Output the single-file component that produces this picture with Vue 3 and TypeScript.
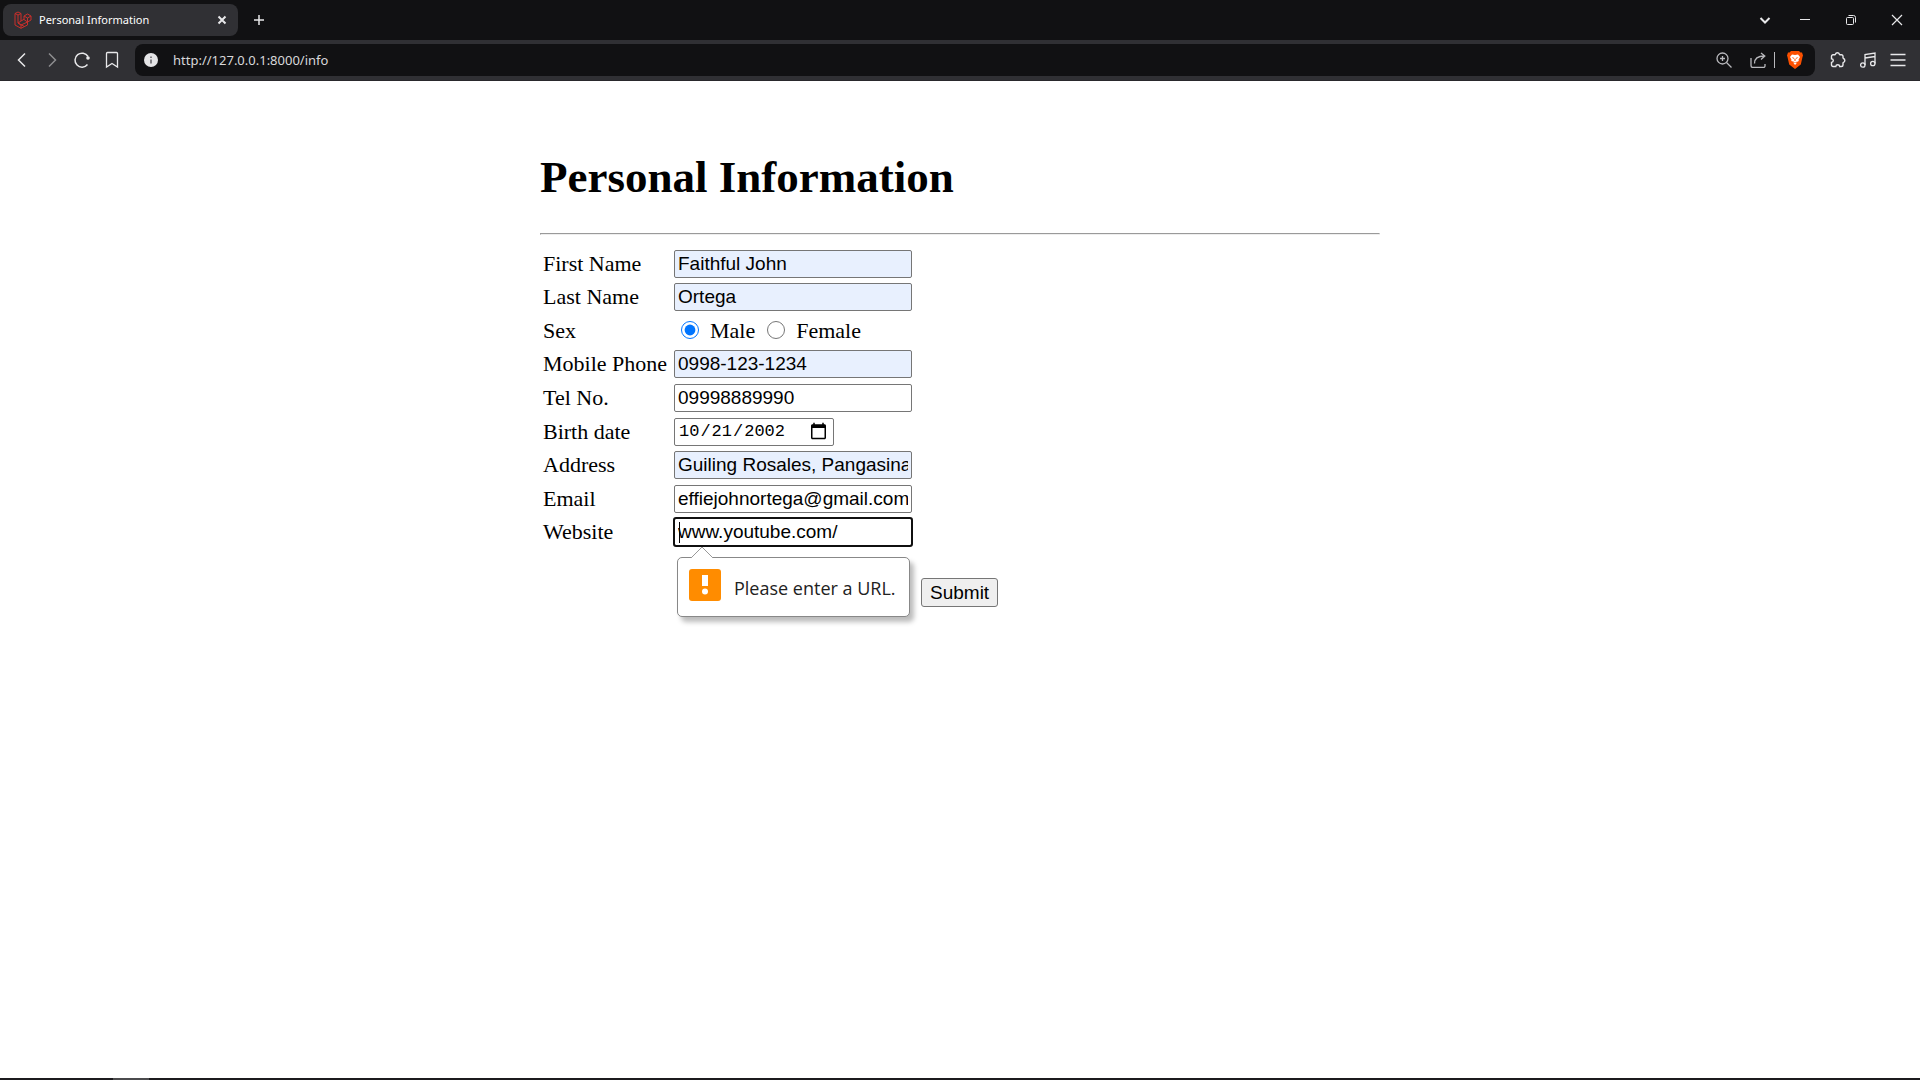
<script setup lang="ts">
import { reactive } from 'vue'

interface Field {
  id: string
  label: string
  type: 'text' | 'radio' | 'tel' | 'date' | 'email' | 'url'
  filled?: boolean
  roomy?: boolean
}

const fields: Field[] = [
  { id: 'firstName', label: 'First Name', type: 'text', filled: true },
  { id: 'lastName', label: 'Last Name', type: 'text', filled: true },
  { id: 'sex', label: 'Sex', type: 'radio', roomy: true },
  { id: 'mobile', label: 'Mobile Phone', type: 'text', filled: true },
  { id: 'telephone', label: 'Tel No.', type: 'tel', roomy: true },
  { id: 'birthDate', label: 'Birth date', type: 'date', roomy: true },
  { id: 'address', label: 'Address', type: 'text', filled: true },
  { id: 'email', label: 'Email', type: 'email', roomy: true },
  { id: 'website', label: 'Website', type: 'url' },
]

const form = reactive<Record<string, string>>({
  firstName: 'Faithful John',
  lastName: 'Ortega',
  sex: 'Male',
  mobile: '0998-123-1234',
  telephone: '09998889990',
  birthDate: '2002-10-21',
  address: 'Guiling Rosales, Pangasinan',
  email: 'effiejohnortega@gmail.com',
  website: 'www.youtube.com/',
})
</script>

<template>
  <div class="window">
    <header>
      <div class="tabs">
        <div class="tab">
          <svg class="logo" width="18" height="18" viewBox="0 0 18 18">
            <path d="M1 2.5 4 1l3 1.500v7.500l3-1.700V5l3.500-2L17 5v4l-3.500 2v3L7 17.300l-6-3.300zM1 2.500 4 4l3-1.500M4 4v8l3-2M4 12l6 3.300M10 5l3.500 2L17 5M13.500 7v4L10 8.500M7 17.300V14l6.500-3M4 12l3 2" />
          </svg>
          <span class="title">Personal Information</span>
          <button class="plain" aria-label="Close tab">
            <svg width="10" height="10" viewBox="0 0 10 10" stroke-width="2"><path d="M1.500 1.500l7 7M8.500 1.500l-7 7" /></svg>
          </button>
        </div>
        <button class="plain" aria-label="New tab">
          <svg width="12" height="12" viewBox="0 0 12 12" stroke-width="1.500"><path d="M6 1v10M1 6h10" /></svg>
        </button>
        <div class="controls">
          <button class="plain" aria-label="Search tabs">
            <svg width="12" height="12" viewBox="0 0 12 12" stroke-width="2"><path d="M1.500 4 6 8.500 10.500 4" /></svg>
          </button>
          <button class="plain" aria-label="Minimize">
            <svg width="12" height="12" viewBox="0 0 12 12"><path d="M1 5.500h10" /></svg>
          </button>
          <button class="plain" aria-label="Restore">
            <svg width="12" height="12" viewBox="0 0 12 12"><rect x="1.500" y="3.500" width="7" height="7" rx="1" /><path d="M3.500 1.500h5a2 2 0 0 1 2 2v5" /></svg>
          </button>
          <button class="plain" aria-label="Close">
            <svg width="12" height="12" viewBox="0 0 12 12" stroke-width="1.200"><path d="M1 1l10 10M11 1 1 11" /></svg>
          </button>
        </div>
      </div>

      <div class="toolbar">
        <nav>
          <button class="plain" aria-label="Back">
            <svg width="18" height="18" viewBox="0 0 18 18" stroke-width="1.500"><path d="M12 2.500 5.500 9l6.500 6.500" /></svg>
          </button>
          <button class="plain dim" aria-label="Forward">
            <svg width="18" height="18" viewBox="0 0 18 18" stroke-width="1.500"><path d="M6 2.500 12.500 9 6 15.500" /></svg>
          </button>
          <button class="plain" aria-label="Reload">
            <svg width="18" height="18" viewBox="0 0 18 18" stroke-width="1.500"><path d="M14.500 13.500A7 7 0 1 1 15 5.500" /><circle cx="15" cy="7" r="1.800" fill="#e8e8ea" stroke="none" /></svg>
          </button>
          <button class="plain" aria-label="Bookmark">
            <svg width="18" height="18" viewBox="0 0 18 18" stroke-width="1.300"><path d="M4.500 1.500h9a1 1 0 0 1 1 1v13.500L9 12.500 3.500 16V2.500a1 1 0 0 1 1-1z" /></svg>
          </button>
        </nav>
        <div class="address">
          <svg width="14" height="14" viewBox="0 0 14 14"><circle cx="7" cy="7" r="7" fill="#e4e4e6" stroke="none" /><path d="M7 6.500V10.500M7 3.500v1.500" stroke="#66656b" stroke-width="1.600" /></svg>
          <input class="url" type="text" aria-label="Address bar" value="http://127.0.0.1:8000/info" />
          <div class="actions">
            <svg width="16" height="16" viewBox="0 0 16 16" stroke-width="1.300"><circle cx="6.500" cy="6.500" r="5.500" /><path d="M10.500 10.500l5 5M4 6.500h5M6.500 4v5" /></svg>
            <svg width="16" height="16" viewBox="0 0 16 16" stroke-width="1.300"><path d="M1 6v7.500a2 2 0 0 0 2 2h10.500a1.500 1.500 0 0 0 1.500-1.500v-2M4.500 11.500c0-5 3-7.500 10-7.500M11 1l3.800 3L11 7.500" /></svg>
            <span class="divider"></span>
            <svg width="16" height="18" viewBox="0 0 16 18" stroke="none"><path class="shield" d="M4 0h8l1.500 1.500 1.500 0 1 3-.5 1.500-1.700 7.500L8 18l-5.800-4.500L.5 6 0 4.500l1-3 1.500 0z" /><path fill="#fff" d="M5 3.500 8 4l3-.5 2 2.500-1.500 2.700.3 1.300-2.500 1.200.2 1.300L8 14l-1.500-2 .2-1.300L4.200 10l.3-1.300L3 6z" /><path class="shield" d="M4.500 6.300 7 6.800 6.700 8zM11.500 6.300 9 6.800 9.300 8zM7.600 7.500h.8l.3 2L8 10l-.7-.5zM6 10.600l2 .8 2-.8-.8 1.200H6.800z" /></svg>
          </div>
        </div>
        <div class="extras">
          <button class="plain" aria-label="Extensions">
            <svg width="16" height="16" viewBox="0 0 16 16" stroke-width="1.400"><path d="M3 2.700h1.800c.4 0 .5-.2.600-.5a2.100 2.100 0 0 1 4 0c.1.300.3.500.6.500h1.500a1.500 1.500 0 0 1 1.500 1.500v1.600c0 .4.200.6.500.7a2.100 2.100 0 0 1 0 3.900c-.3.100-.5.300-.5.600v2a1.500 1.500 0 0 1-1.500 1.500H9.700c-.2-2.300-3.700-2.300-3.900 0H3A1.500 1.500 0 0 1 1.500 13v-2.600c2.400-.2 2.400-3.400 0-3.600V4.200A1.500 1.500 0 0 1 3 2.700z" /></svg>
          </button>
          <button class="plain" aria-label="Media">
            <svg width="16" height="16" viewBox="0 0 16 16" stroke-width="1.300"><circle cx="2.800" cy="13" r="2.200" /><circle cx="12.800" cy="11.500" r="2.200" /><path d="M5 13V2.500L15 1v10.500M5 6l10-1.500" /></svg>
          </button>
          <button class="plain" aria-label="Menu">
            <svg width="16" height="14" viewBox="0 0 16 14" stroke-width="1.300"><path d="M.5 1.500h15M.5 7h15M.5 12.500h15" /></svg>
          </button>
        </div>
      </div>
    </header>

    <main>
      <h1>Personal Information</h1>
      <hr />
      <form novalidate @submit.prevent>
        <table>
          <tbody>
            <tr v-for="field in fields" :key="field.id" :class="{ roomy: field.roomy }">
              <td>
                <span v-if="field.type === 'radio'">{{ field.label }}</span>
                <label v-else :for="field.id">{{ field.label }}</label>
              </td>
              <td>
                <div v-if="field.type === 'radio'" class="choices">
                  <label v-for="option in ['Male', 'Female']" :key="option">
                    <input v-model="form.sex" type="radio" name="sex" :value="option" />{{ option }}
                  </label>
                </div>
                <div v-else class="control" :class="{ current: field.type === 'url' }">
                  <input :id="field.id" v-model="form[field.id]" class="box" :class="{ filled: field.filled }" :type="field.type" />
                  <div v-if="field.type === 'url'" class="bubble" role="alert">
                    <svg class="arrow" width="24" height="12" viewBox="0 0 24 12"><path d="M1 12 12 1l11 11" fill="#fff" stroke="#999" /></svg>
                    <svg width="32" height="32" viewBox="0 0 32 32" stroke="none"><rect width="32" height="32" rx="3" fill="#ff8c00" /><path fill="#fff" d="M13 6h6v11h-6z" /><circle cx="16" cy="22.500" r="3" fill="#fff" /></svg>
                    <span>Please enter a URL.</span>
                  </div>
                </div>
              </td>
            </tr>
            <tr>
              <td colspan="2"></td>
              <td class="send"><button class="submit" type="submit">Submit</button></td>
            </tr>
          </tbody>
        </table>
      </form>
    </main>
    <footer><span></span></footer>
  </div>
</template>

<style>
body {
  background: #fff;
}
</style>

<style scoped>
.window {
  display: flex;
  flex-direction: column;
  min-height: 100vh;
}

header {
  font-family: "Noto Sans", sans-serif;
  color: #fff;
}

header svg {
  display: block;
  flex: none;
  fill: none;
  stroke: #e8e8ea;
}

.plain {
  padding: 0;
  border: 0;
  background: none;
}

.tabs {
  display: flex;
  align-items: center;
  height: 40px;
  background: #111113;
}

.tab {
  display: flex;
  align-items: center;
  box-sizing: border-box;
  width: 235px;
  height: 32px;
  margin: 0 15px 0 3px;
  padding: 0 11px;
  border-radius: 8px;
  background: #303034;
}

.tab .logo {
  stroke: #c92f2b;
}

.title {
  flex: 1;
  padding-left: 7px;
  font-size: 11px;
  line-height: 16px;
}

.controls {
  display: flex;
  gap: 34px;
  margin-left: auto;
  padding-right: 17px;
}

.controls .plain:first-child {
  margin-right: -6px;
}

.toolbar {
  display: flex;
  align-items: center;
  height: 40px;
  border-bottom: 1px solid #29282c;
  background: #303034;
}

nav {
  display: flex;
  gap: 12px;
  padding: 0 14px 0 13px;
}

.dim {
  opacity: 0.5;
}

.address {
  display: flex;
  flex: 1;
  align-items: center;
  height: 32px;
  padding: 0 12px 0 9px;
  border-radius: 8px;
  background: #111113;
}

.url {
  flex: 1;
  min-width: 0;
  padding: 0 0 0 15px;
  border: 0;
  outline: 0;
  background: none;
  color: #d8d8da;
  font-family: "Noto Sans", sans-serif;
  font-size: 13px;
}

.actions {
  display: flex;
  align-items: center;
  gap: 18px;
}

.actions svg {
  stroke: #b9b9bd;
}

.actions svg:last-child {
  stroke: none;
}

.shield {
  fill: #fb5000;
}

.divider {
  width: 1px;
  height: 16px;
  margin: 0 -6px 0 -10px;
  background: #b9b9bd;
}

.extras {
  display: flex;
  align-items: center;
  gap: 14px;
  padding: 0 14px 0 15px;
}

main {
  flex: 1;
  box-sizing: border-box;
  width: 100%;
  max-width: 840px;
  margin: 0 auto;
  padding-top: 70px;
  color: #000;
  font-family: "Liberation Serif", "Times New Roman", serif;
  font-size: 22px;
}

h1 {
  margin: 0 0 30px;
  font-size: 45px;
  line-height: 52px;
}

hr {
  margin: 0 0 11px;
  border: 1px solid;
  border-color: #9a9a9a #eee #eee #9a9a9a;
}

table {
  border-spacing: 2px 3px;
  white-space: nowrap;
}

td {
  height: 28px;
  padding: 1px;
  line-height: 28px;
}

.roomy td {
  height: 29px;
}

td:first-child {
  min-width: 127px;
}

.control {
  position: relative;
  display: flex;
}

.box {
  box-sizing: border-box;
  width: 238px;
  height: 28px;
  padding: 1px 3px;
  border: 1px solid #767676;
  border-radius: 2px;
  outline: 0;
  background: #fff;
  color: #000;
  font-family: "Liberation Sans", Arial, sans-serif;
  font-size: 19px;
}

.box.filled {
  background: #e8f0fe;
}

.box[type="date"] {
  width: 160px;
  font-family: "Liberation Mono", monospace;
  font-size: 17px;
}

.box::-webkit-calendar-picker-indicator {
  width: 19px;
  height: 19px;
}

.current .box {
  outline: 2px solid #101010;
  outline-offset: -1px;
}

.current::after {
  content: "";
  position: absolute;
  top: 4px;
  left: 5px;
  width: 1px;
  height: 21px;
  background: #000;
}

.choices {
  display: flex;
  gap: 12px;
  padding-left: 7px;
}

.choices label {
  display: flex;
  align-items: center;
}

.choices input {
  width: 18px;
  height: 18px;
  margin: 0 11px 2px 0;
}

.bubble {
  position: absolute;
  top: 39px;
  left: 3px;
  z-index: 1;
  display: flex;
  align-items: flex-start;
  gap: 13px;
  box-sizing: border-box;
  width: 233px;
  height: 60px;
  padding: 11px;
  border: 1px solid #888;
  border-radius: 5px;
  background: #fff;
  box-shadow: 4px 5px 5px #0004;
  color: #222;
  font-family: "Open Sans", sans-serif;
  font-size: 18px;
  line-height: 38px;
}

.bubble svg {
  flex: none;
}

.arrow {
  position: absolute;
  top: -12px;
  left: 12px;
}

.send {
  padding: 28px 0 0 6px;
}

.submit {
  display: block;
  box-sizing: border-box;
  height: 29px;
  padding: 0 8px;
  border: 1px solid #767676;
  border-radius: 3px;
  background: #efefef;
  color: #000;
  font-family: "Liberation Sans", Arial, sans-serif;
  font-size: 19px;
}

footer {
  height: 2px;
  background: #1c1b1e;
}

footer span {
  display: block;
  width: 36px;
  height: 2px;
  margin-left: 113px;
  background: #4b4b4d;
}
</style>
